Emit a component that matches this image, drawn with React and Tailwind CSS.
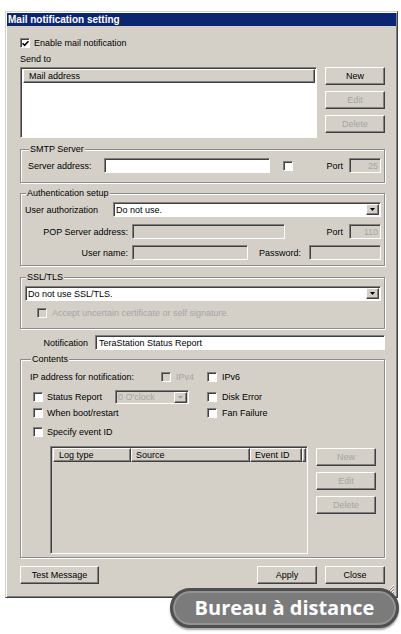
import React from "react";

const sunken =
  "border border-t-[#808080] border-l-[#808080] border-b-white border-r-white shadow-[inset_1px_1px_0_#404040]";
const raised =
  "border border-t-white border-l-white border-b-[#404040] border-r-[#404040] shadow-[inset_-1px_-1px_0_#808080]";
const dis = "text-[#a4a4a4]";

function Check({ checked, disabled }) {
  return (
    <span
      className={`w-[10px] h-[10px] shrink-0 flex items-center justify-center ${sunken} ${
        disabled ? "bg-[#d4d0c8]" : "bg-white"
      }`}
    >
      {checked && (
        <svg width="7" height="7" viewBox="0 0 7 7">
          <path d="M0.5 3.2 L2.6 5.3 L6.5 1.2" stroke="#000" strokeWidth="1.6" fill="none" />
        </svg>
      )}
    </span>
  );
}

function DropBtn({ disabled }) {
  return (
    <span className={`w-[13px] h-[11px] shrink-0 bg-[#d4d0c8] flex items-center justify-center ${raised}`}>
      <svg width="5" height="3" viewBox="0 0 5 3">
        <path d="M0 0H5L2.5 3Z" fill={disabled ? "#a0a0a0" : "#000"} />
      </svg>
    </span>
  );
}

function Btn({ children, disabled, w = "w-[60px]" }) {
  return (
    <div
      className={`${w} h-[18px] shrink-0 bg-[#d4d0c8] flex items-center justify-center ${raised} ${
        disabled ? dis : "text-black"
      }`}
    >
      {children}
    </div>
  );
}

function Group({ label, className = "", children }) {
  return (
    <fieldset
      className={`w-[365px] border border-[#8c8c8c] shadow-[inset_1px_1px_0_#fff,1px_1px_0_#fff] ${className}`}
    >
      <legend className="ml-[1px] px-[1px] leading-[10px] bg-[#d4d0c8]">{label}</legend>
      {children}
    </fieldset>
  );
}

export default function App() {
  return (
    <div className="relative w-[401px] h-[634px] bg-white overflow-hidden font-['Liberation_Sans',Arial,sans-serif] text-[9px] leading-[12px] text-black">
      <div className="relative ml-[5px] mt-[11px] w-[393px] h-[587px] bg-[#d4d0c8] border border-t-[#d4d0c8] border-l-[#d4d0c8] border-r-[#404040] border-b-[#404040] shadow-[inset_1px_1px_0_#fff,inset_-1px_-1px_0_#808080] p-[1px]">
        <div className="h-[13px] bg-[#0b2670] text-white font-bold text-[10px] leading-[13px] pl-[1px]">
          Mail notification setting
        </div>

        <div className="pl-[13px] w-[378px] flex flex-col">
          {/* enable */}
          <div className="mt-[11px] h-[12px] flex items-center gap-[4px]">
            <Check checked />
            <span>Enable mail notification</span>
          </div>
          <div className="mt-[4px] h-[12px] flex items-center">Send to</div>

          {/* mail list */}
          <div className="mt-[2px] flex">
            <div className={`w-[297px] h-[71px] bg-white ${sunken} p-[1px] pl-[2px] pt-[1px] flex flex-col`}>
              <div className={`h-[14px] bg-[#d4d0c8] ${raised} pl-[5px] flex items-center`}>Mail address</div>
            </div>
            <div className="ml-[8px] flex flex-col gap-[6px]">
              <Btn>New</Btn>
              <Btn disabled>Edit</Btn>
              <Btn disabled>Delete</Btn>
            </div>
          </div>

          {/* SMTP */}
          <Group label="SMTP Server" className="mt-[6px] pl-[7px] pr-[3px] pb-[9px]">
            <div className="mt-[4px] h-[15px] flex items-center">
              <span className="w-[76px]">Server address:</span>
              <div className={`w-[166px] h-[15px] bg-white ${sunken}`} />
              <span className="ml-[13px]">
                <Check />
              </span>
              <span className="ml-auto">Port</span>
              <div className={`ml-[6px] w-[32px] h-[15px] ${sunken} ${dis} flex items-center justify-end pr-[2px]`}>25</div>
            </div>
          </Group>

          {/* Auth */}
          <Group label="Authentication setup" className="mt-[5px] pl-[4px] pr-[3px] pb-[5px]">
            <div className="mt-[4px] h-[15px] flex items-center">
              <span className="w-[88px]">User authorization</span>
              <div className={`flex-1 h-[15px] bg-white ${sunken} flex items-center pl-[2px] pr-[1px]`}>
                <span className="flex-1">Do not use.</span>
                <DropBtn />
              </div>
            </div>
            <div className="mt-[7px] h-[15px] flex items-center">
              <span className="w-[103px] text-right">POP Server address:</span>
              <div className={`ml-[4px] w-[153px] h-[15px] ${sunken}`} />
              <span className="ml-auto">Port</span>
              <div className={`ml-[6px] w-[32px] h-[15px] ${sunken} ${dis} flex items-center justify-end pr-[2px]`}>110</div>
            </div>
            <div className="mt-[6px] h-[15px] flex items-center">
              <span className="w-[103px] text-right">User name:</span>
              <div className={`ml-[4px] w-[116px] h-[15px] ${sunken}`} />
              <span className="ml-[11px]">Password:</span>
              <div className={`ml-auto w-[72px] h-[15px] ${sunken}`} />
            </div>
          </Group>

          {/* SSL */}
          <Group label="SSL/TLS" className="mt-[6px] pl-[4px] pr-[3px] pb-[9px]">
            <div className={`mt-[4px] h-[15px] bg-white ${sunken} flex items-center pl-[2px] pr-[1px]`}>
              <span className="flex-1">Do not use SSL/TLS.</span>
              <DropBtn />
            </div>
            <div className="mt-[6px] h-[12px] flex items-center">
              <span className="ml-[12px]">
                <Check disabled />
              </span>
              <span className={`ml-[5px] ${dis}`}>Accept uncertain certificate or self signature.</span>
            </div>
          </Group>

          {/* Notification */}
          <div className="mt-[6px] w-[365px] h-[15px] flex items-center">
            <span className="w-[68px] text-right">Notification</span>
            <div className={`ml-[7px] flex-1 h-[15px] bg-white ${sunken} flex items-center pl-[3px]`}>
              TeraStation Status Report
            </div>
          </div>

          {/* Contents */}
          <Group label="Contents" className="mt-[4px] pl-[9px] pb-[3px]">
            <div className="mt-[7px] h-[12px] flex items-center">
              <span className="w-[131px]">IP address for notification:</span>
              <Check disabled />
              <span className={`ml-[5px] w-[31px] ${dis}`}>IPv4</span>
              <Check />
              <span className="ml-[5px]">IPv6</span>
            </div>
            <div className="mt-[7px] h-[14px] flex items-center">
              <span className="ml-[3px]">
                <Check />
              </span>
              <span className="ml-[4px] w-[68px]">Status Report</span>
              <div className={`w-[74px] h-[14px] ${sunken} flex items-center pl-[2px] pr-[1px]`}>
                <span className={`flex-1 ${dis}`}>0 O'clock</span>
                <DropBtn disabled />
              </div>
              <span className="ml-[18px]">
                <Check />
              </span>
              <span className="ml-[5px]">Disk Error</span>
            </div>
            <div className="mt-[3px] h-[12px] flex items-center">
              <span className="ml-[3px]">
                <Check />
              </span>
              <span className="ml-[4px] w-[160px]">When boot/restart</span>
              <Check />
              <span className="ml-[5px]">Fan Failure</span>
            </div>
            <div className="mt-[7px] h-[12px] flex items-center">
              <span className="ml-[3px]">
                <Check />
              </span>
              <span className="ml-[4px]">Specify event ID</span>
            </div>
            <div className="mt-[8px] flex">
              <div className={`ml-[20px] w-[258px] h-[108px] ${sunken} p-[1px] pl-[2px]`}>
                <div className="h-[14px] flex">
                  <div className={`w-[78px] ${raised} pl-[5px] flex items-center`}>Log type</div>
                  <div className={`w-[119px] ${raised} pl-[4px] flex items-center`}>Source</div>
                  <div className={`w-[52px] ${raised} pl-[4px] flex items-center`}>Event ID</div>
                  <div className={`flex-1 ${raised}`} />
                </div>
              </div>
              <div className="ml-[8px] mt-[2px] flex flex-col gap-[6px]">
                <Btn disabled>New</Btn>
                <Btn disabled>Edit</Btn>
                <Btn disabled>Delete</Btn>
              </div>
            </div>
          </Group>

          {/* bottom buttons */}
          <div className="mt-[8px] w-[365px] flex items-center">
            <Btn w="w-[79px]">Test Message</Btn>
            <span className="ml-auto">
              <Btn>Apply</Btn>
            </span>
            <span className="ml-[8px]">
              <Btn>Close</Btn>
            </span>
          </div>
        </div>

        {/* resize grip */}
        <svg className="absolute right-[2px] bottom-[2px]" width="11" height="11" viewBox="0 0 11 11">
          <path d="M10 1L1 10M10 4L4 10M10 7L7 10" stroke="#fff" strokeWidth="1" />
          <path d="M10 2L2 10M10 5L5 10M10 8L8 10" stroke="#808080" strokeWidth="1" />
        </svg>
      </div>

      {/* overlay badge */}
      <div className="absolute left-[170px] top-[588px] w-[229px] h-[40px] rounded-full bg-[#7b7b7b] border-[3px] border-[#4f4f4f] shadow-[inset_0_0_0_2px_#939393,0_2px_2px_rgba(0,0,0,0.35)] flex items-center justify-center">
        <span className="font-['Open_Sans',sans-serif] font-bold text-[20px] leading-[24px] text-white">
          Bureau à distance
        </span>
      </div>
    </div>
  );
}
